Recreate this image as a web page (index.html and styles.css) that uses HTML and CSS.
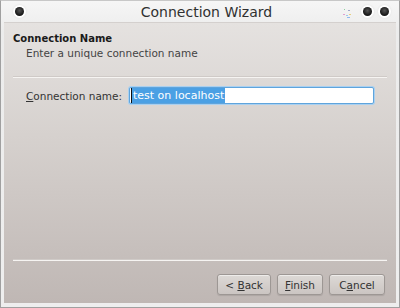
FILE: index.html
```html
<!doctype html>
<html>
    <head>
        <title>Connection Wizard</title>
        <link rel="stylesheet" href="styles.css">
    </head>
    <body>
        <div class="window">
            <div class="titlebar">
                <span class="winbtn"></span>
                <div class="title">Connection Wizard</div>
                <svg class="sticky" width="14" height="10" viewBox="0 0 14 10">
                    <rect x="1" y="1" width="1" height="1" fill="#8fd0a0"/>
                    <rect x="5" y="2" width="2" height="1" fill="#a0a8c8"/>
                    <rect x="0" y="6" width="2" height="1" fill="#e0a0d0"/>
                    <rect x="3" y="7" width="2" height="1" fill="#a0c8e8"/>
                    <rect x="6" y="6" width="2" height="1" fill="#e8d080"/>
                    <rect x="4" y="9" width="3" height="1" fill="#90b8f0"/>
                </svg>
                <span class="winbtn"></span>
                <span class="winbtn"></span>
            </div>
            <div class="content">
                <div class="page-header">
                    <div class="page-title">Connection Name</div>
                    <div class="page-subtitle">Enter a unique connection name</div>
                </div>
                <hr class="sep">
                <div class="field">
                    <label for="conn-name"><u>C</u>onnection name:</label>
                    <div class="input"><span class="selected">test on localhost</span></div>
                </div>
                <div class="spacer"></div>
                <hr class="sep">
                <div class="buttonsBlock">
                    <button type="button" class="btn">&lt; <u>B</u>ack</button>
                    <button type="button" class="btn"><u>F</u>inish</button>
                    <button type="button" class="btn">C<u>a</u>ncel</button>
                </div>
            </div>
        </div>
    </body>
</html>
```

FILE: styles.css
```css
html, body {
  margin: 0;
  height: 100%;
  overflow: hidden;
}

body {
  font: 10.5px "DejaVu Sans", sans-serif;
  color: #2a2a2a;
}

.window {
  box-sizing: border-box;
  height: 308px;
  display: flex;
  flex-direction: column;
  border: 1px solid #a0a0a0;
  border-top-color: #c8c8c8;
  background: linear-gradient(#f6f6f6, #ececec 30px, #eeeeee);
  padding: 0 3px 4px 3px;
}

.titlebar {
  height: 21px;
  display: flex;
  align-items: center;
  padding: 0 3px 0 7px;
}

.titlebar .title {
  flex: 1;
  text-align: center;
  font-size: 14px;
  color: #303030;
  padding-left: 42px;
}

.winbtn {
  width: 9px;
  height: 9px;
  border-radius: 50%;
  background: radial-gradient(circle at 50% 40%, #555 0, #1c1c1c 60%, #101010);
  box-shadow: 0 0 0 2px #fff, 0 0 2px 2px #ddd;
  margin: 0 4px;
}

.sticky {
  margin-right: 2px;
  margin-top: 2px;
}

.content {
  flex: 1;
  display: flex;
  flex-direction: column;
  background: linear-gradient(#e5e2e0, #d6d1ce 40%, #bfb7b4 100%);
  border-top: 1px solid #d4d0ce;
  padding: 0 9px 8px;
}

.page-header {
  padding-top: 9px;
  height: 44px;
}

.page-title {
  font-weight: bold;
  font-size: 10px;
  color: #1a1a1a;
  line-height: 14px;
}

.page-subtitle {
  padding-left: 13px;
  line-height: 14px;
  color: #444;
}

.sep {
  margin: 0;
  border: 0;
  height: 2px;
  background: #f6f4f2;
  border-top: 1px solid #cfcac7;
  box-sizing: border-box;
}

.field {
  display: flex;
  align-items: center;
  margin-top: 9px;
  padding-left: 13px;
}

.field label {
  flex: none;
  width: 103px;
  white-space: nowrap;
  font-size: 10.5px;
  color: #333;
}

.input {
  width: 242px;
  height: 15px;
  border: 1px solid #5fa4dc;
  border-radius: 2px;
  box-shadow: 0 0 0 1px #a9d0f0;
  background: #fff;
  display: flex;
  align-items: center;
  padding-left: 1px;
}

.input .selected {
  background: #4ba0e4;
  color: #fff;
  font-size: 11px;
  line-height: 15px;
  padding: 0 1px;
  border-left: 1px solid #111;
}

.spacer {
  flex: 1;
}

.buttonsBlock {
  display: flex;
  justify-content: flex-end;
  gap: 6px;
  margin-top: 13px;
  padding-right: 2px;
}

.btn {
  height: 21px;
  padding: 0 7px;
  font: 10.5px "DejaVu Sans", sans-serif;
  color: #333;
  background: linear-gradient(#ddd9d6, #cbc5c2);
  border: 1px solid #9d9794;
  border-radius: 3px;
  box-shadow: inset 0 1px 0 rgba(255, 255, 255, 0.5), 0 1px 1px rgba(0, 0, 0, 0.1);
}

.btn:first-child {
  min-width: 54px;
}

.btn:last-child {
  min-width: 56px;
}
```
